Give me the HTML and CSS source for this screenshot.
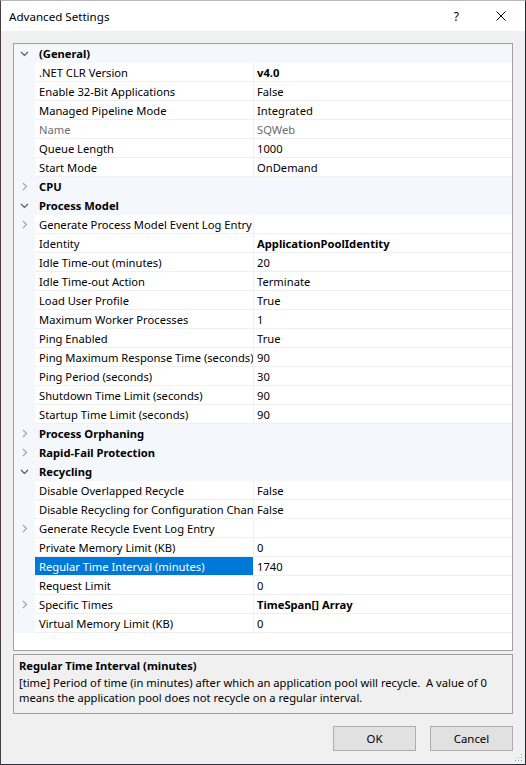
FILE: index.html
```html
<!DOCTYPE html>
<html>
<head>
<meta charset="utf-8">
<link rel="stylesheet" href="styles.css">
</head>
<body>
<div class="window">
  <div class="titlebar">
    <span class="title">Advanced Settings</span>
    <span class="help">?</span>
    <svg class="close" width="10" height="10" viewBox="0 0 10 10"><path d="M0.5 0.5 L9.5 9.5 M9.5 0.5 L0.5 9.5" stroke="#000" stroke-width="1" fill="none"/></svg>
  </div>
  <div class="content">
    <div class="grid">
      <div class="cat"><span class="gut"><svg class="chev" width="9" height="9" viewBox="0 0 9 9"><path d="M1 3 L4.5 6.5 L8 3" class="down"/></svg></span><span class="cname">(General)</span></div>
      <div class="row"><span class="gut"></span><span class="name">.NET CLR Version</span><span class="val b">v4.0</span></div>
      <div class="row"><span class="gut"></span><span class="name">Enable 32-Bit Applications</span><span class="val">False</span></div>
      <div class="row"><span class="gut"></span><span class="name">Managed Pipeline Mode</span><span class="val">Integrated</span></div>
      <div class="row dis"><span class="gut"></span><span class="name">Name</span><span class="val">SQWeb</span></div>
      <div class="row"><span class="gut"></span><span class="name">Queue Length</span><span class="val">1000</span></div>
      <div class="row"><span class="gut"></span><span class="name">Start Mode</span><span class="val">OnDemand</span></div>
      <div class="cat"><span class="gut"><svg class="chev" width="9" height="9" viewBox="0 0 9 9"><path d="M3 1 L6.5 4.5 L3 8" class="right"/></svg></span><span class="cname">CPU</span></div>
      <div class="cat"><span class="gut"><svg class="chev" width="9" height="9" viewBox="0 0 9 9"><path d="M1 3 L4.5 6.5 L8 3" class="down"/></svg></span><span class="cname">Process Model</span></div>
      <div class="row"><span class="gut"><svg class="chev" width="9" height="9" viewBox="0 0 9 9"><path d="M3 1 L6.5 4.5 L3 8" class="right"/></svg></span><span class="name">Generate Process Model Event Log Entry</span><span class="val"></span></div>
      <div class="row"><span class="gut"></span><span class="name">Identity</span><span class="val b">ApplicationPoolIdentity</span></div>
      <div class="row"><span class="gut"></span><span class="name">Idle Time-out (minutes)</span><span class="val">20</span></div>
      <div class="row"><span class="gut"></span><span class="name">Idle Time-out Action</span><span class="val">Terminate</span></div>
      <div class="row"><span class="gut"></span><span class="name">Load User Profile</span><span class="val">True</span></div>
      <div class="row"><span class="gut"></span><span class="name">Maximum Worker Processes</span><span class="val">1</span></div>
      <div class="row"><span class="gut"></span><span class="name">Ping Enabled</span><span class="val">True</span></div>
      <div class="row"><span class="gut"></span><span class="name">Ping Maximum Response Time (seconds)</span><span class="val">90</span></div>
      <div class="row"><span class="gut"></span><span class="name">Ping Period (seconds)</span><span class="val">30</span></div>
      <div class="row"><span class="gut"></span><span class="name">Shutdown Time Limit (seconds)</span><span class="val">90</span></div>
      <div class="row"><span class="gut"></span><span class="name">Startup Time Limit (seconds)</span><span class="val">90</span></div>
      <div class="cat"><span class="gut"><svg class="chev" width="9" height="9" viewBox="0 0 9 9"><path d="M3 1 L6.5 4.5 L3 8" class="right"/></svg></span><span class="cname">Process Orphaning</span></div>
      <div class="cat"><span class="gut"><svg class="chev" width="9" height="9" viewBox="0 0 9 9"><path d="M3 1 L6.5 4.5 L3 8" class="right"/></svg></span><span class="cname">Rapid-Fail Protection</span></div>
      <div class="cat"><span class="gut"><svg class="chev" width="9" height="9" viewBox="0 0 9 9"><path d="M1 3 L4.5 6.5 L8 3" class="down"/></svg></span><span class="cname">Recycling</span></div>
      <div class="row"><span class="gut"></span><span class="name">Disable Overlapped Recycle</span><span class="val">False</span></div>
      <div class="row"><span class="gut"></span><span class="name">Disable Recycling for Configuration Changes</span><span class="val">False</span></div>
      <div class="row"><span class="gut"><svg class="chev" width="9" height="9" viewBox="0 0 9 9"><path d="M3 1 L6.5 4.5 L3 8" class="right"/></svg></span><span class="name">Generate Recycle Event Log Entry</span><span class="val"></span></div>
      <div class="row"><span class="gut"></span><span class="name">Private Memory Limit (KB)</span><span class="val">0</span></div>
      <div class="row sel"><span class="gut"></span><span class="name">Regular Time Interval (minutes)</span><span class="val">1740</span></div>
      <div class="row"><span class="gut"></span><span class="name">Request Limit</span><span class="val">0</span></div>
      <div class="row"><span class="gut"><svg class="chev" width="9" height="9" viewBox="0 0 9 9"><path d="M3 1 L6.5 4.5 L3 8" class="right"/></svg></span><span class="name">Specific Times</span><span class="val b">TimeSpan[] Array</span></div>
      <div class="row"><span class="gut"></span><span class="name">Virtual Memory Limit (KB)</span><span class="val">0</span></div>
    </div>
    <div class="desc">
      <div class="desc-title">Regular Time Interval (minutes)</div>
      <div class="desc-text">[time] Period of time (in minutes) after which an application pool will recycle.&nbsp; A value of 0 means the application pool does not recycle on a regular interval.</div>
    </div>
    <div class="buttons">
      <button class="btn">OK</button>
      <button class="btn">Cancel</button>
    </div>
    <svg class="grip" width="10" height="10" viewBox="0 0 10 10">
      <rect x="8" y="2" width="1" height="1" fill="#a0a0a0"/>
      <rect x="5" y="5" width="1" height="1" fill="#a0a0a0"/>
      <rect x="8" y="5" width="1" height="1" fill="#a0a0a0"/>
      <rect x="2" y="8" width="1" height="1" fill="#a0a0a0"/>
      <rect x="5" y="8" width="1" height="1" fill="#a0a0a0"/>
      <rect x="8" y="8" width="1" height="1" fill="#a0a0a0"/>
    </svg>
  </div>
</div>
</body>
</html>
```
FILE: styles.css
```css
html, body {
  margin: 0;
  padding: 0;
  background: #1f2b3b;
}
body {
  font-family: "Noto Sans", "Liberation Sans", sans-serif;
  font-size: 11.2px;
  color: #000;
}
.window {
  width: 526px;
  height: 765px;
  box-sizing: border-box;
  border-left: 1px solid #4a3d44;
  border-right: 1px solid #1f2b3b;
  border-bottom: 1px solid #2a2f3a;
  border-top: 1px solid #b9b9b9;
  background: #f0f0f0;
  display: flex;
  flex-direction: column;
}
.titlebar {
  height: 30px;
  background: #fff;
  display: flex;
  align-items: center;
  flex-shrink: 0;
}
.title {
  margin-left: 8px;
  font-size: 11.6px;
  flex: 1;
}
.help {
  font-size: 12px;
  margin-right: 37px;
}
.close {
  margin-right: 19px;
}
.content {
  flex: 1;
  position: relative;
  padding: 12px 12px 0 12px;
  display: flex;
  flex-direction: column;
}
.grid {
  height: 608px;
  box-sizing: border-box;
  border: 1px solid #a0a0a0;
  background: #fff;
  overflow: hidden;
}
.row, .cat {
  display: flex;
  height: 19px;
  line-height: 18px;
  box-sizing: border-box;
}
.cat {
  background: #f4f7fc;
  font-weight: bold;
}
.gut {
  width: 21px;
  flex-shrink: 0;
  background: #f4f7fc;
  display: flex;
  align-items: center;
  justify-content: center;
}
.cname {
  padding-left: 4px;
  padding-top: 1px;
}
.name {
  width: 219px;
  flex-shrink: 0;
  box-sizing: border-box;
  padding-left: 4px;
  padding-top: 1px;
  border-right: 1px solid #f0f0f0;
  border-bottom: 1px solid #f0f0f0;
  white-space: nowrap;
  overflow: hidden;
}
.val {
  flex: 1;
  padding-left: 3px;
  padding-top: 1px;
  border-bottom: 1px solid #f0f0f0;
  white-space: nowrap;
}
.b {
  font-weight: bold;
}
.dis .name, .dis .val {
  color: #6d6d6d;
}
.sel .name {
  background: #0078d7;
  color: #fff;
}
.chev path {
  fill: none;
  stroke-width: 1.2;
}
.chev .down {
  stroke: #555;
}
.chev .right {
  stroke: #a6a6a6;
}
.desc {
  margin-top: 3px;
  height: 60px;
  box-sizing: border-box;
  border: 1px solid #a0a0a0;
  padding: 3px 5px 0 5px;
}
.desc-title {
  font-weight: bold;
  line-height: 16px;
}
.desc-text {
  line-height: 15px;
  margin-top: 1px;
}
.buttons {
  display: flex;
  justify-content: flex-end;
  gap: 14px;
  margin-top: 12px;
}
.btn {
  width: 83px;
  height: 25px;
  background: #e1e1e1;
  border: 1px solid #adadad;
  font-family: "Noto Sans", "Liberation Sans", sans-serif;
  font-size: 11.4px;
  color: #000;
  padding: 0;
}
.grip {
  position: absolute;
  right: 2px;
  bottom: 2px;
}
```
